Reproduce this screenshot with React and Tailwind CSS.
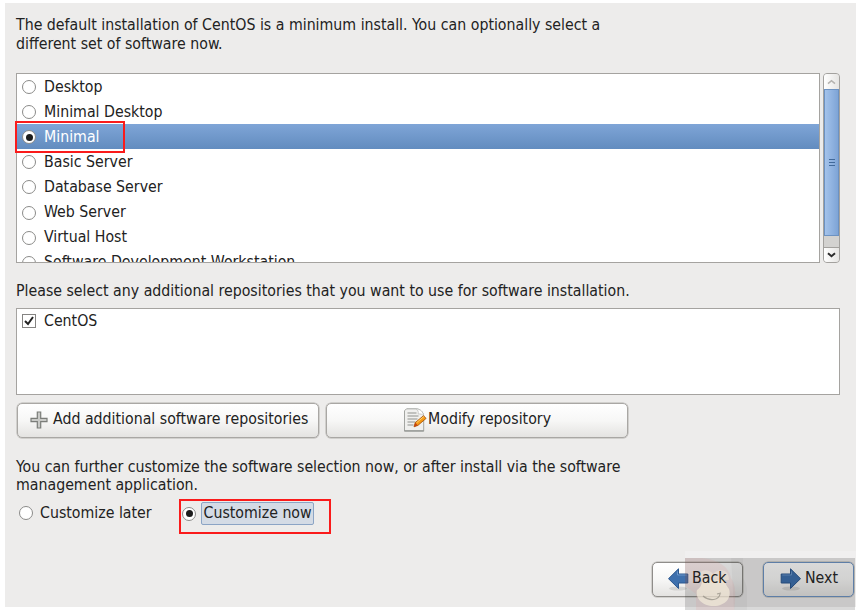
import { useState } from 'react';

const packages = [
  'Desktop',
  'Minimal Desktop',
  'Minimal',
  'Basic Server',
  'Database Server',
  'Web Server',
  'Virtual Host',
  'Software Development Workstation'
];

const Radio = ({ checked }) => (
  <span className="flex h-[14px] w-[14px] shrink-0 items-center justify-center rounded-full border border-[#8b8b89] bg-white">
    {checked && <span className="h-[7px] w-[7px] rounded-full bg-[#1c1c1c]" />}
  </span>
);

const PlusIcon = () => (
  <svg width="18" height="18" viewBox="0 0 18 18" className="shrink-0">
    <path d="M7.3 1h3.4v6.3H17v3.4h-6.3V17H7.3v-6.3H1V7.3h6.3z" fill="#c9cac7" stroke="#7b7d79" strokeWidth="1.2" />
  </svg>
);

const EditIcon = () => (
  <svg width="24" height="24" viewBox="0 0 24 24" className="shrink-0">
    <path d="M3.5.8h9.7c4 .3 7 3 7.5 7v15.4H1.5V2.8z" fill="#f0f0ee" stroke="#a3a5a1" />
    <path d="M1.5 22.8h19.2" stroke="#8b8d89" />
    <path d="M13.2.8c2 1.4 2.3 3 2 5.2 2.4-.3 4.3.3 5.5 1.8-.5-4-3.5-6.7-7.5-7z" fill="#fff" stroke="#b9bab7" strokeWidth=".7" />
    <path d="M4.5 5h9M4.5 8h11M4.5 11h10M4.5 14h8M4.5 17h6" stroke="#8f918d" strokeWidth="1.2" />
    <path d="M11 18.8l1.3-4.2 8.2-6.9 2.6 2.7-8.2 7z" fill="#f59a16" stroke="#a34d05" strokeWidth=".8" />
    <path d="M13.5 14.8l7.4-6.3" stroke="#ffd36b" strokeWidth="1" />
    <path d="M11 18.8l1.3-4.2 2.6 2.8z" fill="#c64610" />
  </svg>
);

const Arrow = ({ flip }) => (
  <svg width="22" height="24" viewBox="0 0 22 24" className={flip ? 'shrink-0 -scale-x-100' : 'shrink-0'}>
    <ellipse cx="11" cy="21.5" rx="9" ry="2" fill="#000" opacity=".1" />
    <path d="M1.2 7h9.3V1.8L20.5 11.7 10.5 21.5V16H1.2z" fill="#3e70ad" stroke="#2b578f" />
    <path d="M2.3 8h9.2V4.4" fill="none" stroke="#6f9bcd" strokeWidth=".9" />
  </svg>
);

const Grip = () => (
  <span className="flex flex-col gap-[2px]">
    <span className="h-[1px] w-[6px] bg-[#41699a]" />
    <span className="h-[1px] w-[6px] bg-[#41699a]" />
    <span className="h-[1px] w-[6px] bg-[#41699a]" />
  </span>
);

const Scrollbar = () => (
  <div className="flex h-[190px] w-[17px] flex-col overflow-hidden rounded-[4px] border border-[#a3a19e] bg-[#d3d2d0]">
    <div className="flex h-[15px] shrink-0 items-center justify-center bg-gradient-to-r from-white to-[#e6e5e3]">
      <svg width="9" height="6" viewBox="0 0 9 6"><path d="M1 4.7l3.5-3 3.5 3" fill="none" stroke="#b5b3b0" strokeWidth="1.6" /></svg>
    </div>
    <div className="flex h-[147px] shrink-0 items-center justify-center border border-[#6c92c2] bg-gradient-to-r from-[#a4c3eb] to-[#7ea4d6]">
      <Grip />
    </div>
    <div className="grow" />
    <div className="flex h-[15px] shrink-0 items-center justify-center border-t border-[#a3a19e] bg-gradient-to-r from-white to-[#e6e5e3]">
      <svg width="9" height="6" viewBox="0 0 9 6"><path d="M1 1.2l3.5 3 3.5-3" fill="none" stroke="#2c2c2c" strokeWidth="2" /></svg>
    </div>
  </div>
);

const Watermark = () => (
  <div className="absolute left-[682px] top-[551px] h-[59px] w-[174px] pl-[3px]">
    <div className="h-[7px] w-[171px] bg-white/20" />
    <div className="h-[52px] w-[170px] bg-black/15">
      <svg width="62" height="52" viewBox="0 0 62 52">
        <path d="M0 0h18C34 2 44 9 46 20c5 7 5 19 3 32H11V36L0 28z" fill="#e58b8b" opacity=".14" />
        <path d="M46 0h12v20c6 9 5 22 4 32H49z" fill="#000" opacity=".03" />
        <path d="M13 22c0-11 10-12 15-6 6-6 16-5 16 6z" fill="#f4edda" opacity=".45" />
        <path d="M17 22h23c0 4 2 6 4 9 3 9-4 17-15 17-12 0-19-8-17-16 3-2 5-5 5-10z" fill="#f4edda" opacity=".7" />
        <path d="M18 38c7 6 16 4 17-2M32 36l4-1" fill="none" stroke="#999389" strokeWidth="1.2" opacity=".8" />
      </svg>
    </div>
  </div>
);

const buttonStyle = 'flex h-[35px] items-center rounded-[5px] border-[1.5px] bg-gradient-to-b from-white via-[#f7f7f6] to-[#e4e3e1] shadow-[0_0_0_0.5px_#b5b3b0]';

export default function App() {
  const [selected, setSelected] = useState('Minimal');
  const [customize, setCustomize] = useState('now');

  return (
    <div className="relative h-[615px] w-[865px] overflow-hidden bg-white pl-[5px] pt-[3px] font-['DejaVu_Sans_Condensed','DejaVu_Sans',sans-serif] text-[15.76px] leading-[18.5px] text-[#222]">
      <main className="h-[604px] w-[851px] bg-[#edeceb] pl-[11px] pt-[13px]">
        <p>
          <span className="block whitespace-nowrap">The default installation of CentOS is a minimum install. You can optionally select a</span>
          <span className="block">different set of software now.</span>
        </p>

        <div className="mt-[20px] flex gap-[3px]">
          <div className="h-[190px] w-[804px] overflow-hidden border border-[#a5a3a0] bg-white">
            {packages.map((name) => (
              <div
                key={name}
                onClick={() => setSelected(name)}
                className={`flex h-[25.1px] items-center gap-2 pl-[5px] pt-px ${selected === name ? 'bg-gradient-to-b from-[#7fa5d7] to-[#628cbf] text-white' : ''}`}
              >
                <Radio checked={selected === name} />
                <span>{name}</span>
              </div>
            ))}
          </div>
          <Scrollbar />
        </div>

        <p className="mt-[19px] whitespace-nowrap">Please select any additional repositories that you want to use for software installation.</p>

        <div className="mt-[7px] h-[87px] w-[824px] border border-[#a5a3a0] bg-white pl-[5px] pt-[3px]">
          <div className="flex items-center gap-2">
            <span className="flex h-[14px] w-[14px] items-center justify-center border border-[#858482]">
              <svg width="10" height="10" viewBox="0 0 10 10"><path d="M1 5l3 3 5-7" fill="none" stroke="#222" strokeWidth="2" /></svg>
            </span>
            <span>CentOS</span>
          </div>
        </div>

        <div className="mt-[8px] flex gap-[7px] pl-px">
          <button className={`${buttonStyle} w-[302px] gap-[5px] border-[#a9a7a4] pl-[12px]`}>
            <PlusIcon />
            <span className="whitespace-nowrap pb-px">Add additional software repositories</span>
          </button>
          <button className={`${buttonStyle} w-[302px] justify-center gap-px border-[#a9a7a4]`}>
            <EditIcon />
            <span className="pb-px">Modify repository</span>
          </button>
        </div>

        <p className="mt-[20px]">
          <span className="block whitespace-nowrap tracking-[-0.02px]">You can further customize the software selection now, or after install via the software</span>
          <span className="block">management application.</span>
        </p>

        <div className="mt-[4px] flex h-[34px]">
          <div onClick={() => setCustomize('later')} className="flex h-[29px] w-[163px] items-center gap-[7px] pl-[3px]">
            <Radio checked={customize === 'later'} />
            <span>Customize later</span>
          </div>
          <div onClick={() => setCustomize('now')} className="flex h-[35px] w-[152px] items-start gap-[5px] border-2 border-[#fa1b1b] pl-px pt-[1px]">
            <span className="pt-[5px]"><Radio checked={customize === 'now'} /></span>
            <span className="h-[23px] whitespace-nowrap rounded-[2px] border border-[#8ba4c5] bg-[#d4dbe5] px-[1.5px] pt-px">Customize now</span>
          </div>
        </div>

        <div className="mt-[29px] flex gap-[20px] pl-[636px]">
          <button className={`${buttonStyle} w-[91px] gap-[3px] border-[#8f8d8a] pl-[14px]`}>
            <Arrow flip />
            <span className="relative z-10 pb-px">Back</span>
          </button>
          <button className={`${buttonStyle} w-[91px] gap-[3px] border-[#6f95c5] pl-[16px]`}>
            <Arrow />
            <span className="relative z-10 pb-px">Next</span>
          </button>
        </div>
      </main>
      <div className="absolute left-[15px] top-[121px] h-[32px] w-[110px] border-2 border-[#fa1b1b]" />
      <Watermark />
    </div>
  );
}
